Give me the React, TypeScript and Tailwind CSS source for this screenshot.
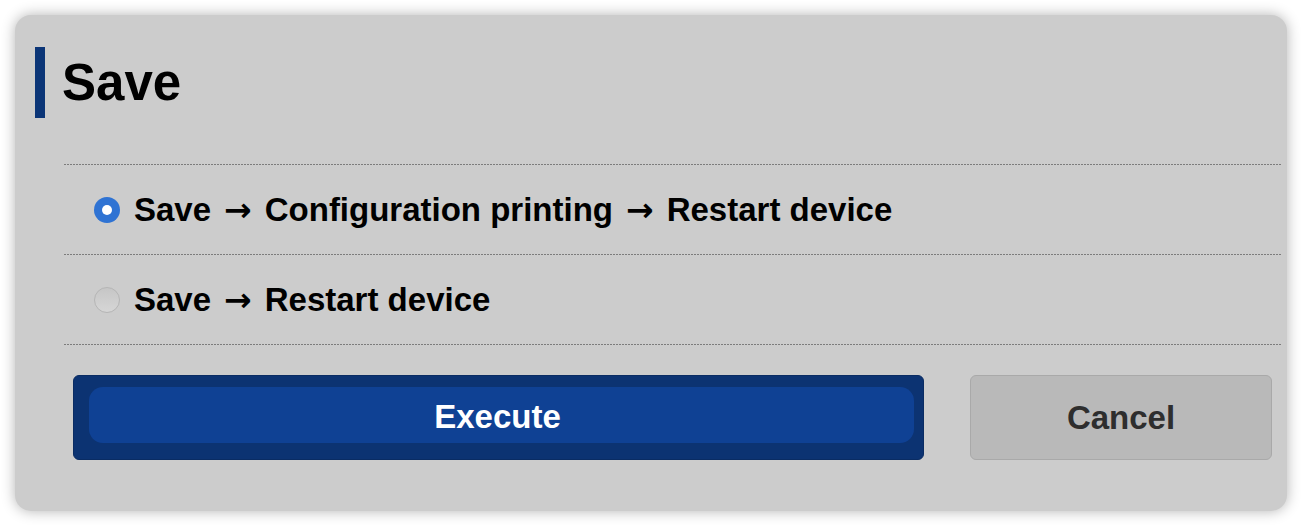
import React, { useState } from "react";

const options = [
  { id: "print", steps: ["Save", "Configuration printing", "Restart device"] },
  { id: "restart", steps: ["Save", "Restart device"] },
];

function Radio({ checked }: { checked: boolean }) {
  if (checked) {
    return (
      <span className="flex h-[26px] w-[26px] shrink-0 items-center justify-center rounded-full bg-[#2f73d3]">
        <span className="h-[10px] w-[10px] rounded-full bg-white" />
      </span>
    );
  }
  return (
    <span className="h-[26px] w-[26px] shrink-0 rounded-full border border-[#b5b5b5] bg-gradient-to-b from-[#c6c6c6] to-[#d6d6d6]" />
  );
}

function Dots() {
  return <div className="h-px bg-[repeating-linear-gradient(90deg,#7c7c7c_0_2px,transparent_2px_3px)]" />;
}

export default function App() {
  const [selected, setSelected] = useState("print");

  return (
    <div
      className="min-h-screen bg-white p-[15px]"
      style={{ fontFamily: '"Liberation Sans", Arial, sans-serif' }}
    >
      <div className="h-[496px] w-[1272px] rounded-[16px] bg-[#cccccc] pl-[20px] pt-[32px] shadow-[0_0_14px_rgba(0,0,0,0.3)]">
        {/* Title */}
        <div className="flex h-[71px] items-center border-l-[10px] border-[#0b3577] pl-[17px]">
          <h1 className="text-[51px] font-bold leading-none text-black">Save</h1>
        </div>

        {/* Options */}
        <div className="ml-[29px] mr-[6px] mt-[46px]">
          {options.map((opt) => (
            <div key={opt.id}>
              <Dots />
              <label
                onClick={() => setSelected(opt.id)}
                className="flex h-[89px] cursor-pointer items-center gap-[14px] pl-[30px]"
              >
                <Radio checked={selected === opt.id} />
                <span className="whitespace-nowrap text-[33px] font-bold text-black">
                  {opt.steps.map((s, i) => (
                    <React.Fragment key={s}>
                      {i > 0 && (
                        <span className="mx-[13px]" style={{ fontFamily: '"DejaVu Sans", sans-serif' }}>
                          →
                        </span>
                      )}
                      {s}
                    </React.Fragment>
                  ))}
                </span>
              </label>
            </div>
          ))}
          <Dots />
        </div>

        {/* Buttons */}
        <div className="mt-[30px] flex gap-[46px] pl-[38px]">
          <button className="h-[85px] w-[851px] rounded-[6px] border border-[#0a2c63] bg-[#0c3372] pb-[16px] pl-[15px] pr-[9px] pt-[11px]">
            <span className="flex h-full w-full items-center justify-center rounded-[14px] bg-[#0f4194] pr-[8px] pt-[3px] text-[33px] font-bold text-white">
              Execute
            </span>
          </button>
          <button className="h-[85px] w-[302px] rounded-[6px] border border-[#a9a9a9] bg-[#b9b9b9] text-[33px] font-bold text-[#2e2e2e]">
            Cancel
          </button>
        </div>
      </div>
    </div>
  );
}
